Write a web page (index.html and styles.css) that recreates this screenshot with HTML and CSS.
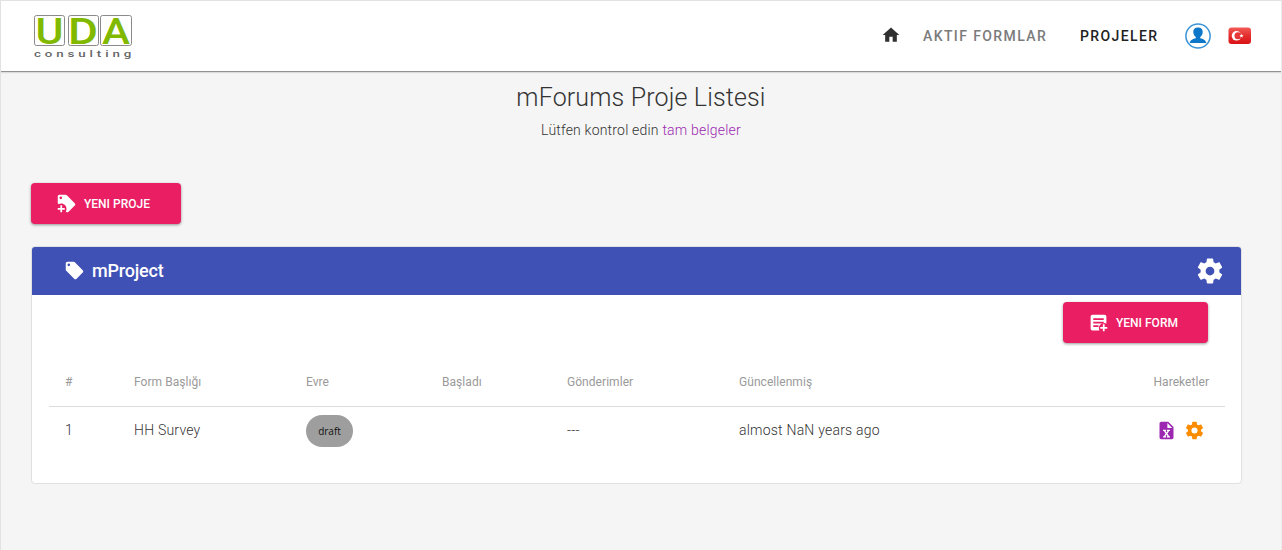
FILE: index.html
```html
<!DOCTYPE html>
<html lang="tr">
<head>
<meta charset="utf-8">
<title>mForums</title>
<link rel="stylesheet" href="styles.css">
</head>
<body>
<svg class="defs" aria-hidden="true">
  <symbol id="gear" viewBox="0 0 24 24"><path d="M12 15.5A3.5 3.5 0 0 1 8.5 12 3.5 3.5 0 0 1 12 8.5a3.5 3.5 0 0 1 3.5 3.5 3.5 3.5 0 0 1-3.5 3.5m7.43-2.53c.04-.32.07-.64.07-.97s-.03-.66-.07-1l2.11-1.63c.19-.15.24-.42.12-.64l-2-3.46c-.12-.22-.39-.31-.61-.22l-2.49 1c-.52-.39-1.06-.73-1.69-.98l-.37-2.65A.506.506 0 0 0 14 2h-4c-.25 0-.46.18-.5.42l-.37 2.65c-.63.25-1.17.59-1.69.98l-2.49-1c-.22-.09-.49 0-.61.22l-2 3.46c-.13.22-.07.49.12.64L4.57 11c-.04.34-.07.67-.07 1s.03.65.07.97l-2.11 1.66c-.19.15-.25.42-.12.64l2 3.46c.12.22.39.3.61.22l2.49-1.01c.52.4 1.06.74 1.69.99l.37 2.65c.04.24.25.42.5.42h4c.25 0 .46-.18.5-.42l.37-2.65c.63-.26 1.17-.59 1.69-.99l2.49 1.01c.22.08.49 0 .61-.22l2-3.46c.12-.22.07-.49-.12-.64z"/></symbol>
</svg>
<div class="page">
  <header class="bar">
    <a class="logo">
      <svg class="logo-art" width="102" height="50" viewBox="0 0 102 50">
        <g class="logo-box"><rect x="2.5" y="2.5" width="30" height="30" rx="2"/><rect x="36.5" y="2.5" width="30" height="30" rx="2"/><rect x="68.5" y="2.5" width="31" height="30" rx="2"/></g>
        <g class="logo-letter"><text x="3.5" y="30.5" textLength="28" lengthAdjust="spacingAndGlyphs">U</text><text x="36" y="30.5" textLength="30" lengthAdjust="spacingAndGlyphs">D</text><text x="70" y="30.5" textLength="28" lengthAdjust="spacingAndGlyphs">A</text></g>
        <text class="logo-sub" transform="translate(2 44) scale(1.4 1)" x="0" y="0" textLength="69.5">consulting</text>
      </svg>
    </a>
    <nav class="nav">
      <svg class="home" viewBox="0 0 24 24"><path d="M10 20v-6h4v6h5v-8h3L12 3 2 12h3v8z"/></svg>
      <a class="link forms">AKTIF FORMLAR</a>
      <a class="link projects">PROJELER</a>
      <svg class="avatar" viewBox="0 0 26 26"><circle cx="13" cy="13" r="12.1" fill="#fff" stroke="#3993d6" stroke-width="1.5"/><path fill="#0c76c8" d="M13 4.500c-3.200 0-4.900 2-4.700 4.700.1 2.100 1.100 3.800 2.500 4.900v1.200c-2.800.7-5.500 1.600-6.100 4.700h16.600c-.6-3.100-3.300-4-6.100-4.700v-1.200c1.400-1.100 2.400-2.800 2.500-4.900.2-2.700-1.500-4.700-4.700-4.700z"/></svg>
      <svg class="flag" viewBox="0 0 24 18"><defs><linearGradient id="red" x2="0" y2="1"><stop offset="0" stop-color="#f25b57"/><stop offset=".5" stop-color="#e42e2e"/><stop offset="1" stop-color="#d91317"/></linearGradient></defs><rect x=".5" y=".5" width="22.5" height="16.5" rx="3" fill="url(#red)"/><circle cx="8.5" cy="8.8" r="4.8" fill="#fff"/><circle cx="10" cy="8.8" r="3.5" fill="#e63838"/><path fill="#fff" d="m13.500 6.700.6 1.400 1.500.1-1.200.9.500 1.500-1.400-.8-1.300.8.400-1.500-1.200-.9 1.600-.1z"/></svg>
    </nav>
  </header>
  <main class="main">
    <h1 class="title">mForums Proje Listesi</h1>
    <p class="intro">Lütfen kontrol edin <a class="docs">tam belgeler</a></p>
    <button class="btn btn-project">
      <svg class="btn-icon" viewBox="0 0 24 24"><path fill-rule="evenodd" d="m21.400 11.600-9-9C12 2.200 11.500 2 11 2H4c-1.100 0-2 .9-2 2v7c0 .5.200 1 .6 1.400l.4.400c.9-.5 2-.8 3-.8 3.300 0 6 2.700 6 6 0 1.100-.3 2.100-.8 3l.4.400c.4.400.9.600 1.400.6s1-.2 1.400-.6l7-7c.4-.4.600-.9.600-1.400s-.2-1-.6-1.400zM5.500 7a1.500 1.500 0 1 1 0-3 1.500 1.500 0 0 1 0 3z"/><path d="M10 19H7v3H5v-3H2v-2h3v-3h2v3h3z"/></svg>
      YENI PROJE
    </button>
    <section class="card">
      <div class="card-head">
        <svg class="tag" viewBox="0 0 24 24"><path fill-rule="evenodd" d="m21.400 11.600-9-9C12 2.200 11.500 2 11 2H4c-1.100 0-2 .9-2 2v7c0 .5.200 1 .6 1.400l9 9c.4.400.9.600 1.400.6s1-.2 1.400-.6l7-7c.4-.4.600-.9.600-1.400s-.2-1-.6-1.400zM5.500 7a1.500 1.500 0 1 1 0-3 1.500 1.500 0 0 1 0 3z"/></svg>
        <span class="card-title">mProject</span>
        <svg class="head-gear"><use href="#gear"/></svg>
      </div>
      <div class="card-tools">
        <button class="btn btn-form">
          <svg class="btn-icon" viewBox="0 0 24 24"><path fill-rule="evenodd" d="M5 3h14a2 2 0 0 1 2 2v8.100a6 6 0 0 0-8 7.900H5a2 2 0 0 1-2-2V5a2 2 0 0 1 2-2zm1 4v2h12V7zm0 4v2h12v-2zm0 4v2h6v-2z"/><path d="M17 14h2v3h3v2h-3v3h-2v-3h-3v-2h3z"/></svg>
          YENI FORM
        </button>
      </div>
      <table class="table">
        <colgroup><col class="c1"><col class="c2"><col class="c3"><col class="c4"><col class="c5"><col class="c6"><col class="c7"></colgroup>
        <thead><tr><th>#</th><th>Form Başlığı</th><th>Evre</th><th>Başladı</th><th>Gönderimler</th><th>Güncellenmiş</th><th class="end">Hareketler</th></tr></thead>
        <tbody><tr><td>1</td><td>HH Survey</td><td class="phase"><span class="chip">draft</span></td><td></td><td>---</td><td>almost NaN years ago</td>
          <td><div class="actions"><svg class="action excel" viewBox="0 0 24 24"><path fill-rule="evenodd" d="M6 2h8l6 6v12a2 2 0 0 1-2 2H6a2 2 0 0 1-2-2V4a2 2 0 0 1 2-2zm7 1.500V9h5.500zM8 11v1.500h1l2 3-2 3H8V20h3.500v-1.500h-.7l1.200-1.800 1.200 1.800h-.7V20H16v-1.500h-1l-2-3 2-3h1V11h-3.500v1.500h.7L12 14.300l-1.200-1.800h.7V11z"/></svg><svg class="action cog"><use href="#gear"/></svg></div></td></tr></tbody>
      </table>
    </section>
  </main>
</div>
</body>
</html>
```
FILE: styles.css
```css
* { box-sizing: border-box; }
body { margin: 0; font-family: Roboto, "Liberation Sans", sans-serif; color: #333; }
.defs { display: block; width: 0; height: 0; }
.page { height: 550px; background: #f5f5f5; border: 1px solid #e2e2e2; border-right-color: #ececec; border-bottom: 0; overflow: hidden; }
.bar { height: 71px; background: #fff; border-bottom: 1px solid #929292; box-shadow: 0 1px 1px #ddd; display: flex; justify-content: space-between; align-items: center; padding: 0 29px 0 31px; }
.logo { display: flex; margin-top: 3px; }
.logo-art { overflow: visible; }
.logo-box rect { fill: #fff; stroke: #8b898b; stroke-width: 1; }
.logo-letter { fill: #80b900; font: 500 37px/1 Roboto, sans-serif; }
.logo-sub { fill: #666; font: 500 9.5px/1 Roboto, sans-serif; }
.nav { display: flex; align-items: center; }
.home { width: 20px; height: 20px; margin-bottom: 2px; fill: #303030; }
.link { font-size: 14px; font-weight: 500; letter-spacing: 1.4px; white-space: nowrap; }
.forms { color: #7b7b7b; margin-left: 22px; width: 157px; }
.projects { width: 105px; color: #222; }
.avatar { width: 26px; height: 26px; }
.flag { width: 24px; height: 18px; margin-left: 17px; }
.main { padding: 0 39px 0 30px; }
.title { margin: 10px -9px 0 0; text-align: center; font-size: 25px; line-height: 32px; font-weight: 300; letter-spacing: .15px; }
.intro { margin: 6px -9px 0 0; text-align: center; font-size: 14px; line-height: 20px; font-weight: 300; letter-spacing: .2px; }
.docs { color: #9c27b0; }
.btn { display: flex; align-items: center; justify-content: flex-start; height: 41px; border: 0; border-radius: 4px; background: #e91e63; color: #fff; font: 500 12px Roboto, sans-serif; padding: 0; box-shadow: 0 1px 3px rgba(0,0,0,.4); white-space: nowrap; }
.btn-icon { width: 21px; height: 21px; fill: #fff; }
.btn-project { width: 149.5px; margin-top: 43px; padding-left: 25px; gap: 7px; }
.btn-form { width: 145px; padding-left: 25px; gap: 7px; }
.card { margin-top: 22px; height: 238px; background: #fff; border: 1px solid #e0e0e0; border-radius: 4px; overflow: hidden; }
.card-head { height: 48px; background: #3f51b5; color: #fff; display: flex; align-items: center; padding: 0 16.5px 1px 31.5px; }
.tag { width: 21px; height: 21px; fill: #fff; }
.card-title { margin-left: 7.5px; font-size: 18px; font-weight: 500; letter-spacing: -.2px; flex: 1; }
.head-gear { width: 30px; height: 30px; fill: #fff; }
.card-tools { height: 62px; padding: 7px 33px 0 0; display: flex; justify-content: flex-end; }
.table { margin-left: 17px; width: 1176px; table-layout: fixed; border-collapse: collapse; text-align: left; }
.c1 { width: 69px; } .c2 { width: 172px; } .c3 { width: 136px; } .c4 { width: 125px; } .c5 { width: 172px; } .c6 { width: 360px; }
.table th { height: 49px; padding: 2px 16px 0; font-size: 12px; font-weight: 400; color: #9a9a9a; border-bottom: 1px solid #dcdcdc; letter-spacing: .05px; }
.table td { height: 48px; padding: 0 16px; font-size: 14px; font-weight: 300; letter-spacing: .22px; }
.table .phase { padding-top: 2px; }
.table .end { text-align: right; }
.chip { display: inline-flex; align-items: center; justify-content: center; vertical-align: middle; width: 47px; height: 32px; border-radius: 16px; background: #9e9e9e; font: 400 10px "Open Sans", sans-serif; letter-spacing: 0; color: #111; }
.actions { display: flex; justify-content: flex-end; gap: 7px; padding-right: 4px; }
.action { width: 21px; height: 21px; }
.excel { fill: #9c27b0; }
.cog { fill: #fb8c00; }
```
